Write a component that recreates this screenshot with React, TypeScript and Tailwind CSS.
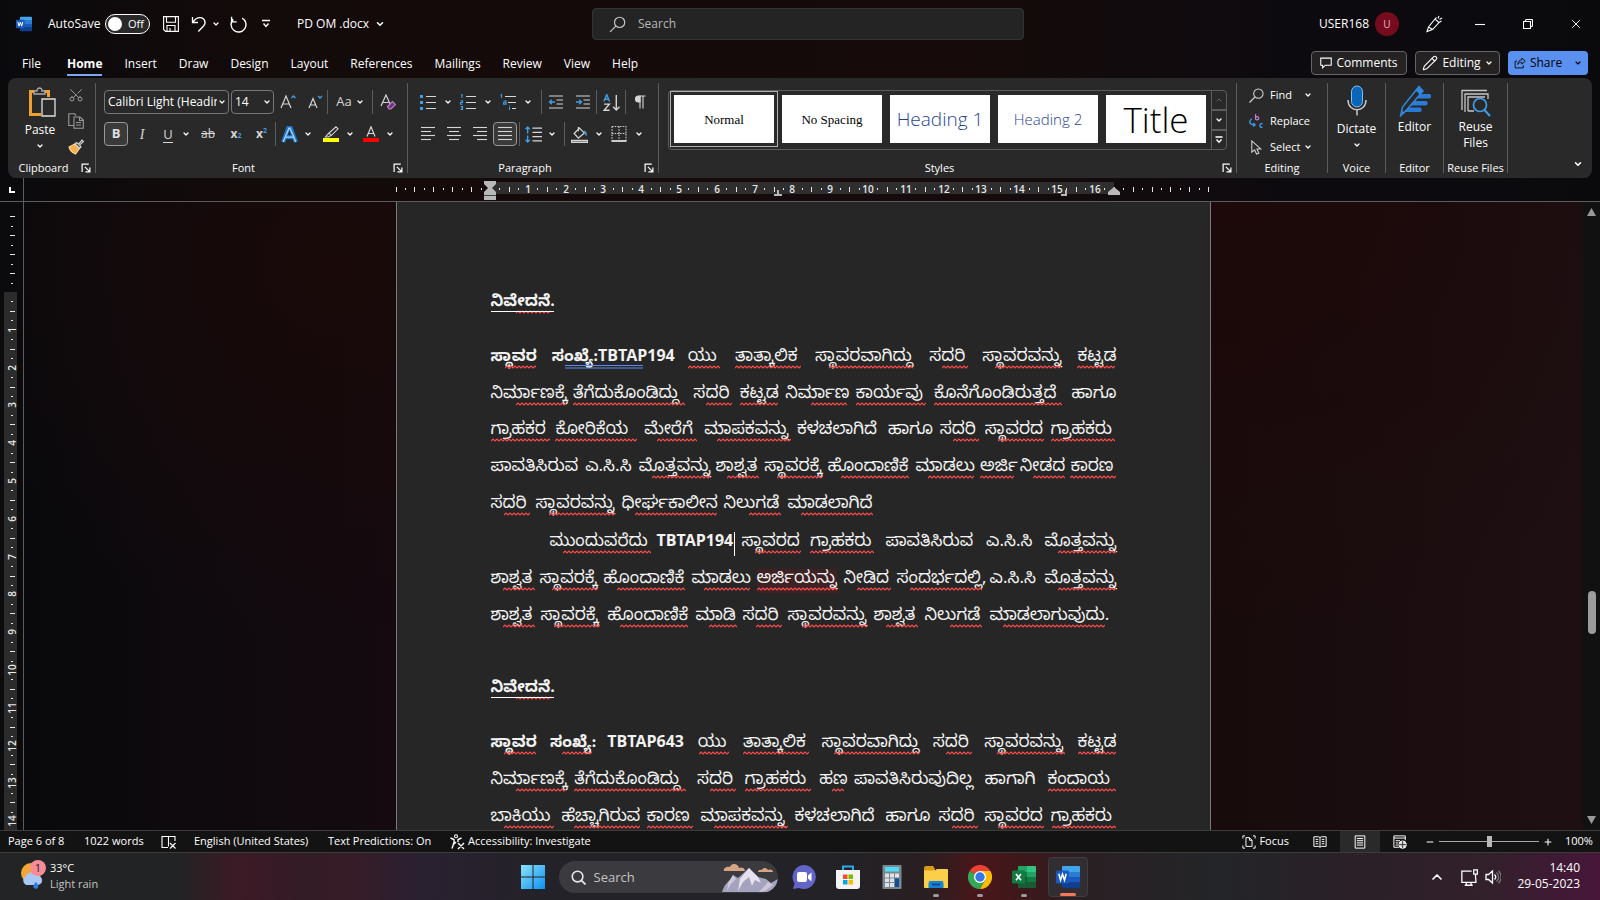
import React from "react";
import {
  Search,
  Scissors,
  Minus,
  Plus,
  X,
  Pencil,
  MessageSquare,
  ChevronDown,
  ChevronUp,
} from "lucide-react";

const PITCH = 37.8;

type IconProps = { className?: string; children: React.ReactNode; box?: string };

function Svg({ className = "size-4", children, box = "0 0 16 16" }: IconProps) {
  return (
    <svg viewBox={box} className={`shrink-0 ${className}`} fill="none" stroke="#d6d6d6" strokeWidth="1.1" aria-hidden="true">
      {children}
    </svg>
  );
}

function Chev({ className = "size-2.5" }: { className?: string }) {
  return <ChevronDown className={`shrink-0 text-white ${className}`} strokeWidth={3.8} aria-hidden="true" />;
}

function Tool({ label, className = "w-[26px]", children }: { label: string; className?: string; children: React.ReactNode }) {
  return (
    <button type="button" aria-label={label} className={`flex h-6 shrink-0 items-center justify-center ${className}`}>
      {children}
    </button>
  );
}

function Bar() {
  return <span className="h-6 w-px shrink-0 bg-[#5c5c5c]" />;
}

function Launcher({ label }: { label: string }) {
  return (
    <button type="button" aria-label={label} className="absolute right-1 bottom-0">
      <Svg className="size-2.5" box="0 0 9 9">
        <path d="M1 8V1h6M3.500 3.500L8 8M8 4v4H4" stroke="#fff" />
      </Svg>
    </button>
  );
}

function Group({ title, className, launcher, children }: { title: string; className: string; launcher?: boolean; children: React.ReactNode }) {
  return (
    <section aria-label={title} className={`relative my-[5px] flex shrink-0 flex-col border-r border-[#5c5c5c] ${className}`}>
      <div className="flex-1">{children}</div>
      <h2 className={`h-2.5 text-center text-[11px] leading-[10px] whitespace-nowrap text-white ${launcher ? "pr-4" : ""}`}>{title}</h2>
      {launcher && <Launcher label={`${title} settings`} />}
    </section>
  );
}

function WordLogo({ className }: { className: string }) {
  return (
    <svg viewBox="0 0 24 24" className={`shrink-0 ${className}`} aria-hidden="true">
      <path d="M7 1h16a1 1 0 0 1 1 1v5H6V2a1 1 0 0 1 1-1z" fill="#41a5ee" />
      <path d="M6 7h18v5H6z" fill="#2b7cd3" />
      <path d="M6 12h18v5.500H6z" fill="#185abd" />
      <path d="M6 17.500h18V22a1 1 0 0 1-1 1H7a1 1 0 0 1-1-1z" fill="#103f91" />
      <rect x="0" y="5.500" width="13" height="13" rx="1.200" fill="#1859bb" />
      <path d="M2.800 8.800l1.700 6.400 2-6 2 6 1.700-6.400" fill="none" stroke="#fff" strokeWidth="1.500" />
    </svg>
  );
}

function ExcelLogo() {
  return (
    <svg viewBox="0 0 24 24" className="size-6" aria-hidden="true">
      <path d="M7 1h8.500v6H6V2a1 1 0 0 1 1-1z" fill="#21a366" />
      <path d="M15 1h8a1 1 0 0 1 1 1v5h-9z" fill="#33c481" />
      <path d="M6 7h9.500v5H6z" fill="#107c41" />
      <path d="M15 7h9v5h-9z" fill="#21a366" />
      <path d="M6 12h9.500v5.500H6z" fill="#185c37" />
      <path d="M15 12h9v5.500h-9z" fill="#107c41" />
      <path d="M6 17.500h18V22a1 1 0 0 1-1 1H7a1 1 0 0 1-1-1z" fill="#185c37" />
      <rect x="0" y="5.500" width="13" height="13" rx="1.200" fill="#107c41" />
      <path d="M4 9l5 6.200M9 9l-5 6.200" stroke="#fff" strokeWidth="1.600" />
    </svg>
  );
}

function TitleBar() {
  return (
    <header className="flex h-12 items-center text-[12px]">
      <div className="flex flex-1 items-center pl-4">
        <WordLogo className="size-4" />
        <label className="ml-4 flex items-center gap-2">
          <span className="w-[49px] whitespace-nowrap">AutoSave</span>
          <input type="checkbox" className="peer sr-only" />
          <span className="flex h-5 w-[45px] items-center gap-1.5 rounded-full border border-white bg-[#292929] pl-0.5 text-[11px]">
            <span className="size-3.5 rounded-full bg-white" />
            Off
          </span>
        </label>
        <Tool label="Save" className="ml-3 w-[18px]">
          <Svg>
            <path d="M.6.6h14.800v14.800H2.600l-2-2zM3.500.6v5.600h9V.6M4 15.400V9.500h8v5.900M7 15v-3" stroke="#fff" />
          </Svg>
        </Tool>
        <Tool label="Undo" className="ml-2.5 w-[18px]">
          <Svg>
            <path d="M1.500 1v5.500H7M1.800 6.200C4 3 6.500 1.500 9.500 1.700c4 .3 6 4.800 3.300 8L7.300 15.500" stroke="#fff" strokeWidth="1.300" />
          </Svg>
        </Tool>
        <Tool label="Undo history" className="w-4">
          <Chev className="size-2" />
        </Tool>
        <Tool label="Redo" className="ml-1 w-5">
          <Svg className="size-[17px]">
            <path d="M1.500.8v4.700h4.800M11.500 2A7 7 0 1 1 3 3.200L1.700 5.200" stroke="#fff" strokeWidth="1.300" />
          </Svg>
        </Tool>
        <Tool label="Customize toolbar" className="ml-2.5 w-4">
          <Svg className="size-2.5" box="0 0 10 10">
            <path d="M1 1.500h8M2.500 4.500L5 7.500l2.500-3" stroke="#fff" strokeWidth="1.400" />
          </Svg>
        </Tool>
        <button type="button" className="ml-[23px] flex items-center gap-1.5 whitespace-nowrap text-[12px]">
          PD OM .docx <Chev className="size-2.5" />
        </button>
      </div>
      <label className="flex h-8 w-[432px] items-center gap-3 rounded border border-[#333] bg-[#252424] px-4">
        <Svg className="size-[17px]">
          <circle cx="10" cy="6" r="4.800" stroke="#c8c8c8" />
          <path d="M6.500 9.500L1 15" stroke="#c8c8c8" />
        </Svg>
        <span className="sr-only">Search document</span>
        <input type="search" placeholder="Search" className="h-6 w-full bg-transparent text-[12px] leading-6 text-[#c8c8c8] outline-none placeholder:text-[#b8b8b8]" />
      </label>
      <div className="flex flex-1 items-center justify-end">
        <span className="text-[12px]">USER168</span>
        <span className="ml-1.5 flex size-6 items-center justify-center rounded-full bg-[#750b1c] text-[10px] text-[#e9b8c8]">U</span>
        <Tool label="Ink tools" className="ml-[25px] w-5">
          <Svg className="size-[18px]" box="0 0 18 18">
            <path d="M2 16.500l1.500-4.500L10 4l4 3.500-6.500 7zM2 16.500l5.500-2M10 4l1.500-1.500M14 7.500L16.500 6M13 3.500l1-2.500M14.500 4.500L17 3M3.500 12l4 2.500" stroke="#fff" />
          </Svg>
        </Tool>
        <Tool label="Minimize" className="ml-3 w-12">
          <Svg className="size-2.5" box="0 0 10 10"><path d="M0 5.500h10" stroke="#fff" /></Svg>
        </Tool>
        <Tool label="Restore" className="w-12">
          <Svg className="size-2.5" box="0 0 10 10">
            <path d="M.5 2.500h7v7h-7zM2.500 2.500V1.500a1 1 0 0 1 1-1h5a1 1 0 0 1 1 1v5a1 1 0 0 1-1 1h-1" stroke="#fff" />
          </Svg>
        </Tool>
        <Tool label="Close" className="w-12">
          <X className="size-3.5 text-white" strokeWidth={1.6} />
        </Tool>
      </div>
    </header>
  );
}

const TABS = ["File", "Home", "Insert", "Draw", "Design", "Layout", "References", "Mailings", "Review", "View", "Help"];

function TabRow() {
  return (
    <nav className="flex h-[30px] items-center justify-between pr-3 pl-[22px] text-[12px]">
      <div className="flex gap-[22px] pt-px">
        {TABS.map((t) =>
          t === "Home" ? (
            <a key={t} href="#home" className="ml-1 h-6 border-b-2 border-[#7fa6f2] leading-6 font-bold text-white">{t}</a>
          ) : (
            <a key={t} href={`#${t.toLowerCase()}`} className="h-6 leading-6 text-white">{t}</a>
          ),
        )}
      </div>
      <div className="flex gap-2">
        <button type="button" className="flex h-6 w-24 items-center justify-center gap-1 rounded border border-[#666] bg-[#242222]">
          <Svg className="size-3"><path d="M1 1.500h14v9.500H7l-3.500 3.500V11H1z" stroke="#fff" strokeWidth="1.400" /></Svg> Comments
        </button>
        <button type="button" className="flex h-6 w-[85px] items-center justify-center gap-1 rounded border border-[#666] bg-[#242222]">
          <Pencil className="size-4" strokeWidth={1.6} /> Editing <Chev className="size-2" />
        </button>
        <button type="button" className="flex h-6 w-20 items-center justify-center gap-1 rounded bg-[#5a90f0] text-black">
          <Svg className="size-3">
            <path d="M4 5.500H1.500v9h11V11M10.500 1.500l4.500 4-4.500 4V7.200C7.500 7 6 8 5 10c.2-4 2.500-6 5.500-6.200z" stroke="#10131c" strokeWidth="1.300" />
          </Svg>
          Share
          <ChevronDown className="ml-2 size-2" strokeWidth={3.4} />
        </button>
      </div>
    </nav>
  );
}

function Lines({ rows }: { rows: [number, number][] }) {
  return (
    <Svg>
      {rows.map(([a, b], i) => (
        <path key={i} d={`M${a} ${1.5 + i * 4}H${b}`} />
      ))}
    </Svg>
  );
}

function ListLines() {
  return <path d="M6 2.500h10M6 8.500h10M6 14.500h10" />;
}

function FontGroup() {
  return (
    <Group title="Font" className="w-[312px]" launcher>
      <div className="flex flex-col gap-2 pt-[7px] pl-2">
        <div className="flex items-center">
          <button type="button" aria-label="Font name" className="flex h-6 w-[125px] items-center justify-between rounded border border-[#777] pr-0.5 pl-[3px] text-[12px]">
            <span className="w-[109px] overflow-hidden text-left whitespace-nowrap">Calibri Light (Headings)</span>
            <Chev className="size-2" />
          </button>
          <button type="button" aria-label="Font size" className="ml-0.5 flex h-6 w-[43px] items-center justify-between rounded border border-[#777] pr-0.5 pl-[3px] text-[12px]">
            14 <Chev className="size-2" />
          </button>
          <Tool label="Grow font" className="w-[28px]">
            <Svg><path d="M1 14L6 2l5 12M2.800 10h6.500" strokeWidth="1.200" /><path d="M11.500 4L13.500 2l2 2" stroke="#3f9ee6" strokeWidth="1.400" /></Svg>
          </Tool>
          <Tool label="Shrink font" className="w-[25px]">
            <Svg><path d="M2 14L6 4.500 10 14M3.500 11h5.200" strokeWidth="1.200" /><path d="M11 2l2 2 2-2" stroke="#3f9ee6" strokeWidth="1.400" /></Svg>
          </Tool>
          <Bar />
          <Tool label="Change case" className="w-11 gap-1 text-[13px] text-[#d6d6d6]">Aa <Chev className="size-2" /></Tool>
          <Bar />
          <Tool label="Clear formatting" className="w-[30px]">
            <Svg><path d="M1 12L6 1l4.500 10M2.500 8.500h6" strokeWidth="1.200" /><path d="M7.500 12.500l5-5 3 3-4.500 4.500H9z" stroke="#c77bd6" fill="#6b3a76" /></Svg>
          </Tool>
        </div>
        <div className="flex items-center">
          <Tool label="Bold" className="w-6 rounded border border-[#999] bg-[#3a3a3a] text-[13px] font-bold text-[#e0e0e0]">B</Tool>
          <Tool label="Italic" className="w-[28px] text-[14px] text-[#d6d6d6]"><span className="font-['Liberation_Serif',serif] italic">I</span></Tool>
          <Tool label="Underline" className="w-6 text-[13px] text-[#d6d6d6]"><span className="border-b border-[#d6d6d6] leading-4">U</span></Tool>
          <Tool label="Underline style" className="w-3"><Chev className="size-2" /></Tool>
          <Tool label="Strikethrough" className="w-8 text-[12px] text-[#d6d6d6]"><span className="line-through">ab</span></Tool>
          <Tool label="Subscript" className="w-6 text-[12px] font-bold text-[#d6d6d6]">x<sub className="text-[7px] text-[#3f9ee6]">2</sub></Tool>
          <Tool label="Superscript" className="w-[27px] text-[12px] font-bold text-[#d6d6d6]">x<sup className="text-[7px] text-[#3f9ee6]">2</sup></Tool>
          <Bar />
          <Tool label="Text effects" className="w-[26px]">
            <Svg className="size-[17px]"><path d="M2 15L7 1.500h2L14 15M4.500 10.500h7" stroke="#1b74c8" strokeWidth="4" /><path d="M2 15L7.500 2h1L14 15M4.500 10.500h7" stroke="#a9d2f5" strokeWidth="1.300" /></Svg>
          </Tool>
          <Tool label="Text effect options" className="w-3"><Chev className="size-2" /></Tool>
          <Tool label="Highlight" className="ml-1 w-[26px]">
            <Svg><path d="M13 .8l2 2-6.500 6.500-2.500-2.200zM6 7l-2.500 2.500-1 1.500h3l3-2" /><path d="M0 14h16" stroke="#ff0" strokeWidth="4" /></Svg>
          </Tool>
          <Tool label="Highlight colour" className="w-3"><Chev className="size-2" /></Tool>
          <Tool label="Font colour" className="ml-0.5 w-[26px]">
            <Svg><path d="M4 10.500L8 .8l4 9.700M5.200 7.500h5.600" strokeWidth="1.200" /><path d="M0 14h16" stroke="#f00" strokeWidth="4" /></Svg>
          </Tool>
          <Tool label="Font colour options" className="w-3"><Chev className="size-2" /></Tool>
        </div>
      </div>
    </Group>
  );
}

function ParagraphGroup() {
  return (
    <Group title="Paragraph" className="w-[251px]" launcher>
      <div className="flex flex-col gap-2 pt-[7px] pl-[7px]">
        <div className="flex items-center">
          <Tool label="Bullets"><Svg><ListLines /><path d="M0 2.500h3M0 8.500h3M0 14.500h3" stroke="#3f9ee6" strokeWidth="3" /></Svg></Tool>
          <Tool label="Bullet options" className="w-3.5"><Chev className="size-2" /></Tool>
          <Tool label="Numbering"><Svg><ListLines /><path d="M1 1l1-.5V4M.5 6.800h2v1.700h-2v1.700h2M.5 12.500h2v3h-2M1 14h1.500" stroke="#3f9ee6" /></Svg></Tool>
          <Tool label="Numbering options" className="w-3.5"><Chev className="size-2" /></Tool>
          <Tool label="Multilevel list"><Svg><path d="M5 2.500h11M8 8.500h8M12 14.500h4" /><path d="M.5 1l1-.5V4M3.500 7h2.500v3.200H3.500V8.700H6M9.500 13v3M9.500 11.500v.8" stroke="#3f9ee6" /></Svg></Tool>
          <Tool label="Multilevel options" className="w-3.5"><Chev className="size-2" /></Tool>
          <span className="w-1.5" />
          <Bar />
          <Tool label="Decrease indent" className="w-[28px]"><Svg><path d="M1 2h14M8.500 6h6.500M8.500 10h6.500M1 14h14" /><path d="M7 8H1.500M3.800 5.700L1.500 8l2.300 2.300" stroke="#3f9ee6" strokeWidth="1.300" /></Svg></Tool>
          <Tool label="Increase indent"><Svg><path d="M1 2h14M8.500 6h6.500M8.500 10h6.500M1 14h14" /><path d="M1 8h5.500M4.200 5.700L6.500 8l-2.300 2.300" stroke="#3f9ee6" strokeWidth="1.300" /></Svg></Tool>
          <Bar />
          <Tool label="Sort" className="w-[28px]"><Svg className="size-[17px]"><path d="M.8 7L3.500.5 6.200 7M1.700 5h3.600" stroke="#3f9ee6" strokeWidth="1.300" /><path d="M1 9.500h5L1 15.300h5.200M12.500 1v14M9.500 12l3 3 3-3" strokeWidth="1.300" /></Svg></Tool>
          <Bar />
          <Tool label="Show marks" className="w-[28px]"><Svg><path d="M7.500 2h6M8 2v12.500M11 2v12.500" /><path d="M8 2H6.500a3 3 0 0 0 0 6H8z" fill="#d6d6d6" /></Svg></Tool>
        </div>
        <div className="flex items-center">
          <Tool label="Align left"><Lines rows={[[1, 15], [1, 11], [1, 15], [1, 11]]} /></Tool>
          <Tool label="Centre"><Lines rows={[[1, 15], [3, 13], [1, 15], [3, 13]]} /></Tool>
          <Tool label="Align right"><Lines rows={[[1, 15], [5, 15], [1, 15], [5, 15]]} /></Tool>
          <Tool label="Justify" className="w-6 rounded border border-[#999] bg-[#3a3a3a]"><Lines rows={[[1, 15], [1, 15], [1, 15], [1, 15]]} /></Tool>
          <span className="w-0.5" />
          <Bar />
          <Tool label="Line spacing"><Svg className="size-[17px]"><path d="M7 2h9M7 6h9M7 10h9M7 14h9" /><path d="M2.500 1v6M.5 3l2-2 2 2M2.500 9v6M.5 13l2 2 2-2" stroke="#3f9ee6" strokeWidth="1.300" /></Svg></Tool>
          <Tool label="Spacing options" className="w-3"><Chev className="size-2" /></Tool>
          <span className="w-1.5" />
          <Bar />
          <Tool label="Shading" className="w-[28px]"><Svg className="size-[17px]"><path d="M3 7l5-5 4.500 4.500L7 11.500zM7 1v4" strokeWidth="1.200" /><path d="M12 5c2 .5 2.500 2 2 4" stroke="#3f9ee6" strokeWidth="1.500" /><path d="M.5 13.500h15v2H.5z" fill="#888" /></Svg></Tool>
          <Tool label="Shading options" className="w-3"><Chev className="size-2" /></Tool>
          <Tool label="Borders" className="w-[28px]"><Svg><path d="M1 .5h14v14M1 .5v14M8 .5v14M1 7.500h14" strokeDasharray="1.500 1.200" /><path d="M.5 15h15" stroke="#fff" strokeWidth="1.500" /></Svg></Tool>
          <Tool label="Border options" className="w-3"><Chev className="size-2" /></Tool>
        </div>
      </div>
    </Group>
  );
}

const STYLES = [
  { name: "Normal", cls: "font-['Liberation_Serif',serif] text-[13px] text-black" },
  { name: "No Spacing", cls: "font-['Liberation_Serif',serif] text-[13px] text-black" },
  { name: "Heading 1", cls: "font-['Open_Sans',sans-serif] font-light text-[19px] text-[#1f4590]" },
  { name: "Heading 2", cls: "font-['Open_Sans',sans-serif] font-light text-[15px] text-[#1f4590]" },
  { name: "Title", cls: "font-['Open_Sans',sans-serif] font-light text-[35px] text-black" },
];

function StylesGroup() {
  return (
    <Group title="Styles" className="w-[578px]" launcher>
      <div className="mt-[7px] ml-[9px] flex h-[60px] w-[559px] rounded border border-[#5c5c5c]">
        <div className="flex flex-1 items-center gap-2 pb-0.5">
          {STYLES.map((s, i) => (
            <button
              key={s.name}
              type="button"
              className={`flex h-12 w-[100px] items-center justify-center bg-white leading-none whitespace-nowrap ${s.cls} ${i === 0 ? "ml-[5px] outline outline-offset-[3px] outline-[#b0b0b0]" : ""}`}
            >
              {s.name}
            </button>
          ))}
        </div>
        <div className="flex w-[15px] flex-col divide-y-2 divide-[#5c5c5c] border-l border-[#5c5c5c]">
          <button type="button" aria-label="Previous styles" className="flex flex-1 items-center justify-center"><ChevronUp className="size-2 text-[#666]" strokeWidth={3} /></button>
          <button type="button" aria-label="Next styles" className="flex flex-1 items-center justify-center"><Chev className="size-2" /></button>
          <button type="button" aria-label="More styles" className="flex flex-1 items-center justify-center">
            <Svg className="size-2" box="0 0 8 8"><path d="M.5 1h7M1.500 3.500L4 6.200l2.500-2.700" stroke="#fff" strokeWidth="1.400" /></Svg>
          </button>
        </div>
      </div>
    </Group>
  );
}

function Ribbon() {
  return (
    <div className="mx-2 flex h-[100px] rounded-lg bg-[#292929]">
      <Group title="Clipboard" className="w-[88px]" launcher>
        <div className="flex">
          <button type="button" className="ml-3 flex w-10 flex-col items-center pt-1 text-[12px] leading-4">
            <svg viewBox="0 0 28 31" className="ml-1 h-[31px] w-7" aria-hidden="true">
              <path d="M7 4.500H2.500v23H13M16 4.500h4.500V10" fill="none" stroke="#f0a030" strokeWidth="3" />
              <path d="M6 7V4h3c0-4 5-4 5 0h3v3z" fill="#292929" stroke="#aaa" strokeWidth="1.300" />
              <path d="M14 12h13v17H14z" fill="#292929" stroke="#e0e0e0" strokeWidth="1.300" />
            </svg>
            <span className="mt-1">Paste</span>
            <Chev className="mt-1 size-2" />
          </button>
          <div className="ml-1 flex flex-col gap-0.5">
            <Tool label="Cut" className="w-6"><Scissors className="size-4 -rotate-90 text-[#9a9a9a]" strokeWidth={1.5} /></Tool>
            <Tool label="Copy" className="w-6"><Svg><path d="M6 12.500H.8V.8h5.700l1.700 1.700M6 4h6l3.300 3v8.300H6zM11.500 4v3.500h3.800M8 9.500h5M8 12h5" stroke="#9a9a9a" /></Svg></Tool>
            <Tool label="Format painter" className="w-6"><Svg><path d="M1 8l6-3 4.500 4.500L7.500 15C5 14 2 11.500 1 8z" fill="#f3b04a" stroke="#ffd893" /><path d="M7 4.800L8.500 3.500l2 1.700L14 1l1.500 1.500-4 3.700L13 8l-1.500 1.500z" fill="#444" stroke="#ddd" /></Svg></Tool>
          </div>
        </div>
      </Group>
      <FontGroup />
      <ParagraphGroup />
      <StylesGroup />
      <Group title="Editing" className="w-[91px]">
        <div className="flex flex-col gap-0.5 pl-3 text-[11px]">
          <button type="button" className="flex h-6 items-center gap-1.5">
            <Svg className="size-[15px]"><circle cx="10" cy="6" r="5" /><path d="M6.500 9.500L.5 15.500" strokeWidth="1.300" /></Svg>
            <span className="w-7 text-left">Find</span> <Chev className="size-2" />
          </button>
          <button type="button" className="flex h-6 items-center gap-1.5">
            <Svg className="size-[15px]"><path d="M7 0v6M7 4.500a1.700 1.700 0 1 0 3.400 0 1.700 1.700 0 1 0-3.400 0" stroke="#c77bd6" strokeWidth="1.300" /><path d="M3 5C-1 8 1 12.500 6.500 11.500M4.500 9.500l2 2-2 2M14.500 10.500c-3-1.500-4.500 4-.2 3.700" stroke="#3f9ee6" strokeWidth="1.400" /></Svg>
            Replace
          </button>
          <button type="button" className="flex h-6 items-center gap-1.5">
            <Svg className="size-[15px]"><path d="M3 1v12l3-2.500L8 15l2.500-1L8.500 9.500h4z" /></Svg>
            Select <Chev className="-ml-0.5 size-2" />
          </button>
        </div>
      </Group>
      <Group title="Voice" className="w-[58px]">
        <button type="button" className="flex w-full flex-col items-center pt-0.5 text-[12px] leading-4">
          <svg viewBox="0 0 20 32" className="h-8 w-5" fill="none" aria-hidden="true">
            <rect x="4.500" y="1" width="11" height="21" rx="5.500" fill="#0a66b8" stroke="#7cc0f5" />
            <path d="M1 15c0 13 18 13 18 0M10 24.500v6" stroke="#c8c8c8" strokeWidth="1.500" />
          </svg>
          <span className="mt-1">Dictate</span>
          <Chev className="mt-1 size-2" />
        </button>
      </Group>
      <Group title="Editor" className="w-[58px]">
        <button type="button" className="flex w-full flex-col items-center pt-0.5 text-[12px] leading-4">
          <svg viewBox="0 0 32 32" className="size-8" aria-hidden="true">
            <path d="M16 9h14a1.500 1.500 0 0 1 0 4.500H14zM13 16h13.500a1.500 1.500 0 0 1 0 4.500H10zM10 22.500h10.500a1.500 1.500 0 0 1 0 4.500H5z" fill="#2a7bd6" />
            <path d="M20 1.500l4 4.500L8 24.500 1.500 31 3.500 22z" fill="#2a2a2a" stroke="#3186e0" strokeWidth="1.500" />
            <path d="M20 1.500l4 4.500-3 3.500-4.500-4zM3 26l3.500 1.500L1.500 31z" fill="#3186e0" />
          </svg>
          <span className="mt-0.5">Editor</span>
        </button>
      </Group>
      <Group title="Reuse Files" className="w-16">
        <button type="button" className="flex w-full flex-col items-center pt-1.5 text-[12px] leading-4">
          <svg viewBox="0 0 30 30" className="size-[30px]" fill="none" stroke="#c8c8c8" aria-hidden="true">
            <path d="M1 21V1.500h25M4 23V5h23v5M7 22V8h17M7 22h6" strokeWidth="1.300" />
            <circle cx="19" cy="16" r="6.500" fill="#292929" stroke="#3f9ee6" strokeWidth="1.700" />
            <path d="M23.500 21L29 27" stroke="#3f9ee6" strokeWidth="2" />
          </svg>
          <span>Reuse</span>
          <span>Files</span>
        </button>
      </Group>
      <div className="flex flex-1 items-end justify-end pr-2 pb-[2px]">
        <Tool label="Collapse ribbon" className="w-3"><Chev className="size-2.5" /></Tool>
      </div>
    </div>
  );
}

function RulerMarks({ from, to, last, vertical }: { from: number; to: number; last: number; vertical?: boolean }) {
  const marks: React.ReactNode[] = [];
  for (let q = from * 4; q <= to * 4; q++) {
    if (q === 0) continue;
    const p = Math.round((q / 4) * PITCH);
    const n = q / 4;
    if (q % 4 === 0 && n > 0 && n <= last) {
      marks.push(
        <text key={q} x={vertical ? 0 : p} y={vertical ? 0 : 4} transform={vertical ? `translate(4 ${p}) rotate(-90)` : undefined} textAnchor="middle" fill="#e8e8e8" stroke="none" fontSize="10" fontWeight="600">
          {n}
        </text>,
      );
    } else {
      const s = q % 2 === 0 ? 2.5 : 1;
      marks.push(<path key={q} d={vertical ? `M${-s} ${p}H${s}` : `M${p} ${-s}V${s}`} stroke="#e8e8e8" strokeWidth="1" shapeRendering="crispEdges" />);
    }
  }
  return <>{marks}</>;
}

function HorizontalRuler() {
  return (
    <div className="flex h-6 border-b border-[#5c5c5c]">
      <div className="flex w-6 items-center justify-center border-r border-[#5c5c5c]">
        <svg viewBox="0 0 6 6" className="size-1.5" aria-hidden="true"><path d="M1 0v5h5" fill="none" stroke="#fff" strokeWidth="2" /></svg>
      </div>
      <div className="flex flex-1 justify-center pr-px">
        <svg viewBox="-94 0 815 22" className="h-[22px] w-[815px]" role="img" aria-label="Horizontal ruler">
          <rect x="0" y="4" width="624" height="12" fill="#2e2e2e" />
          <g transform="translate(0 11)"><RulerMarks from={-2.5} to={19} last={16} /></g>
          <path d="M-6 3h12v3l-4 4 4 4v10H-6V14l4-4-4-4z" fill="#b8b8b8" />
          <path d="M-6 17.500H6" stroke="#444" />
          <path d="M288 12v5M284 17h8M576 12v5h-5" stroke="#b8b8b8" strokeWidth="2" fill="none" />
          <path d="M618 17v-3l6-5 6 5v3z" fill="#b8b8b8" />
        </svg>
      </div>
      <div className="w-[17px]" />
    </div>
  );
}

/* text, width, squiggle start, squiggle length, options */
type W = { t: string; w: number; s?: number; l?: number; bold?: boolean; blue?: boolean; hot?: boolean; caret?: boolean };
const w = (t: string, width: number, s?: number, l?: number, o: Partial<W> = {}): W => ({ t, w: width, s, l, ...o });

function Word({ item }: { item: W }) {
  return (
    <span className={`relative inline-block h-6 leading-6 whitespace-nowrap ${item.bold ? "text-[16px] font-bold" : ""} ${item.hot ? "bg-[#3f2023]" : ""} ${item.caret ? "border-r border-white" : ""}`} style={{ width: item.w }}>
      {item.t}
      {item.l !== undefined && (
        <svg className="absolute bottom-0.5 h-1" style={{ left: item.s, width: item.l }} fill="none" aria-hidden="true">
          {item.blue ? (
            <path d={`M0 .5H${item.l}M0 3H${item.l}`} stroke="#5b8cf5" />
          ) : (
            <path d={"M0 3" + Array.from({ length: Math.ceil(item.l / 2) }, (_, i) => `L${i * 2 + 2} ${i % 2 ? 3 : 1}`).join("")} stroke="#fa4a4a" strokeWidth="1.2" />
          )}
        </svg>
      )}
    </span>
  );
}

function Line({ items, className = "justify-between" }: { items: W[]; className?: string }) {
  return (
    <div className={`flex items-center ${className}`}>
      {items.map((it, i) => (
        <Word key={i} item={it} />
      ))}
    </div>
  );
}

function Heading() {
  return (
    <h3 className="relative flex h-6 w-[63px]">
      <Word item={w("ನಿವೇದನೆ.", 63, 25, 35, { bold: true })} />
      <span className="absolute inset-x-0 bottom-1 border-b border-white" />
    </h3>
  );
}

const DAY = w("ಸದರಿ", 37, 13, 26);
const P1: W[][] = [
  [w("ಸ್ಥಾವರ", 45, 14, 31, { bold: true }), w("ಸಂಖ್ಯೆ:TBTAP194", 120, 13, 78, { bold: true, blue: true }), w("ಯು", 31, 0, 32), w("ತಾತ್ಕಾಲಿಕ", 64, 0, 66), w("ಸ್ಥಾವರವಾಗಿದ್ದು", 98, 14, 84), DAY, w("ಸ್ಥಾವರವನ್ನು", 79, 13, 66), w("ಕಟ್ಟಡ", 38, 0, 38)],
  [w("ನಿರ್ಮಾಣಕ್ಕೆ", 73, 25, 50), w("ತೆಗೆದುಕೊಂಡಿದ್ದು", 111, 0, 112), DAY, w("ಕಟ್ಟಡ", 36, 0, 38), w("ನಿರ್ಮಾಣ", 61, 26, 36), w("ಕಾರ್ಯವು", 69, 0, 70), w("ಕೊನೆಗೊಂಡಿರುತ್ತದೆ", 128, 0, 128), w("ಹಾಗೂ", 44)],
  [w("ಗ್ರಾಹಕರ", 57, 0, 59), w("ಕೋರಿಕೆಯ", 81, 0, 82), w("ಮೇರೆಗೆ", 52, 13, 40), w("ಮಾಪಕವನ್ನು", 85, 13, 74), w("ಕಳಚಲಾಗಿದೆ", 83), w("ಹಾಗೂ", 44), DAY, w("ಸ್ಥಾವರದ", 58, 13, 46), w("ಗ್ರಾಹಕರು", 65, 0, 64)],
  [w("ಪಾವತಿಸಿರುವ", 88), w("ಎ.ಸಿ.ಸಿ", 47), w("ಮೊತ್ತವನ್ನು", 70, 13, 58), w("ಶಾಶ್ವತ", 42, 12, 32), w("ಸ್ಥಾವರಕ್ಕೆ", 57, 13, 46), w("ಹೊಂದಾಣಿಕೆ", 81, 13, 68), w("ಮಾಡಲು", 58, 13, 46), w("ಅರ್ಜಿ", 33, 0, 34), w("ನೀಡದ", 44, 13, 32), w("ಕಾರಣ", 45, 0, 46)],
  [DAY, w("ಸ್ಥಾವರವನ್ನು", 78, 13, 66), w("ಧೀರ್ಘಕಾಲೀನ", 94, 13, 82), w("ನಿಲುಗಡೆ", 56, 25, 32), w("ಮಾಡಲಾಗಿದೆ", 83, 13, 72)],
];
const P2: W[][] = [
  [w("ಶಾಶ್ವತ", 42, 12, 32), w("ಸ್ಥಾವರಕ್ಕೆ", 57, 12, 46), w("ಹೊಂದಾಣಿಕೆ", 81, 13, 68), w("ಮಾಡಲು", 58, 12, 46), w("ಅರ್ಜಿಯನ್ನು", 80, 0, 80, { hot: true }), w("ನೀಡಿದ", 46, 13, 34), w("ಸಂದರ್ಭದಲ್ಲಿ,", 86, 13, 72), w("ಎ.ಸಿ.ಸಿ", 48), w("ಮೊತ್ತವನ್ನು", 71, 13, 58)],
  [w("ಶಾಶ್ವತ", 42, 12, 32), w("ಸ್ಥಾವರಕ್ಕೆ", 59, 13, 46), w("ಹೊಂದಾಣಿಕೆ", 80, 12, 68), w("ಮಾಡಿ", 39, 13, 28), DAY, w("ಸ್ಥಾವರವನ್ನು", 78, 14, 66), w("ಶಾಶ್ವತ", 43, 12, 32), w("ನಿಲುಗಡೆ", 57, 25, 32), w("ಮಾಡಲಾಗುವುದು.", 118, 13, 102)],
];
const P3: W[][] = [
  [w("ಸ್ಥಾವರ", 45, 13, 32, { bold: true }), w("ಸಂಖ್ಯೆ:", 43, 12, 30, { bold: true }), w("TBTAP643", 76, undefined, undefined, { bold: true }), w("ಯು", 31, 1, 30), w("ತಾತ್ಕಾಲಿಕ", 64, 0, 66), w("ಸ್ಥಾವರವಾಗಿದ್ದು", 97, 13, 86), DAY, w("ಸ್ಥಾವರವನ್ನು", 79, 13, 68), w("ಕಟ್ಟಡ", 38, 0, 38)],
  [w("ನಿರ್ಮಾಣಕ್ಕೆ", 73, 25, 50), w("ತೆಗೆದುಕೊಂಡಿದ್ದು", 112, 0, 112), DAY, w("ಗ್ರಾಹಕರು", 64, 0, 66), w("ಹಣ", 24, 13, 12), w("ಪಾವತಿಸಿರುವುದಿಲ್ಲ", 120), w("ಹಾಗಾಗಿ", 52), w("ಕಂದಾಯ", 68, 1, 68)],
  [w("ಬಾಕಿಯು", 62, 13, 50), w("ಹೆಚ್ಚಾಗಿರುವ", 76, 12, 66), w("ಕಾರಣ", 45, 0, 46), w("ಮಾಪಕವನ್ನು", 85, 13, 74), w("ಕಳಚಲಾಗಿದೆ", 82), w("ಹಾಗೂ", 44), DAY, w("ಸ್ಥಾವರದ", 57, 13, 46), w("ಗ್ರಾಹಕರು", 65, 1, 64)],
];

function DocumentArea() {
  return (
    <main className="flex h-[628px] overflow-hidden">
      <div className="w-6 shrink-0 border-r border-[#5c5c5c]">
        <svg viewBox="0 -90 24 628" className="h-[628px] w-6" role="img" aria-label="Vertical ruler">
          <rect x="4" y="0" width="13" height="540" fill="#2b2b2b" />
          <g transform="translate(12 0)"><RulerMarks from={-2} to={14} last={14} vertical /></g>
        </svg>
      </div>
      <div className="flex flex-1 justify-center bg-[radial-gradient(ellipse_30%_70%_at_78%_0%,#1d090a,transparent),radial-gradient(ellipse_25%_60%_at_20%_10%,#190a09,transparent),linear-gradient(90deg,#09090c,#150a10_25%,#180b0c_75%,#1d0f12)] pr-px">
        <article className="w-[815px] border-x border-[#7a7a7a] bg-[#262626] px-[94px] pt-[90px] font-['Noto_Sans_Kannada','Tunga','Noto_Sans','Open_Sans',sans-serif] text-[17px] text-[#f2f2f2]">
          <Heading />
          <div className="mt-[25px] grid h-[183px] auto-rows-fr">
            {P1.map((l, i) => <Line key={i} items={l} className={i === 4 ? "gap-2" : "justify-between"} />)}
          </div>
          <div className="mt-0.5 grid h-[110px] auto-rows-fr">
            <div className="flex items-center justify-between pl-[59px]">
              <div className="flex gap-[7px]">
                <Word item={w("ಮುಂದುವರೆದು", 100, 13, 88)} />
                <Word item={w("TBTAP194", 78, undefined, undefined, { bold: true, caret: true })} />
                <Word item={w("ಸ್ಥಾವರದ", 57, 13, 46)} />
              </div>
              <Word item={w("ಗ್ರಾಹಕರು", 64, 0, 64)} />
              <Word item={w("ಪಾವತಿಸಿರುವ", 89)} />
              <Word item={w("ಎ.ಸಿ.ಸಿ", 47)} />
              <Word item={w("ಮೊತ್ತವನ್ನು", 71, 13, 58)} />
            </div>
            <Line items={P2[0]} />
            <Line items={P2[1]} className="gap-2" />
          </div>
          <div className="mt-[42px]"><Heading /></div>
          <div className="mt-[25px] grid h-[110px] auto-rows-fr">
            {P3.map((l, i) => <Line key={i} items={l} />)}
          </div>
        </article>
      </div>
      <div className="flex w-[17px] shrink-0 flex-col items-center bg-[#111]">
        <svg viewBox="0 0 9 8" className="mt-1.5 h-2 w-[9px]" aria-hidden="true"><path d="M4.500 0L9 8H0z" fill="#999" /></svg>
        <span className="mt-[375px] h-[43px] w-2 rounded bg-[#9b9b9b]" />
        <svg viewBox="0 0 9 8" className="mt-auto mb-1.5 h-2 w-[9px]" aria-hidden="true"><path d="M4.500 8L9 0H0z" fill="#999" /></svg>
      </div>
    </main>
  );
}

function StatusBar() {
  return (
    <footer className="flex h-[23px] items-center border-y border-[#3c3c3c] bg-[#131313] pl-2 text-[11px] whitespace-nowrap">
      <span className="w-[76px]">Page 6 of 8</span>
      <span className="w-[77px]">1022 words</span>
      <Svg className="size-4"><path d="M7.500 2.500v10M7.500 2.500H1v11h6M7.500 2.500H14V7M9 9l5.500 5.500M14.500 9L9 14.500" stroke="#fff" /></Svg>
      <span className="ml-[17px] w-[134px]">English (United States)</span>
      <span className="w-[121px]">Text Predictions: On</span>
      <Svg className="size-4"><circle cx="7" cy="2.300" r="1.500" stroke="#fff" /><path d="M1.500 4l3.500 1.500v3L3 14.500M12.500 4L9 5.500v2.500M5 10l2-2M9 9l6 6M15 9l-6 6" stroke="#fff" strokeWidth="1.400" /></Svg>
      <span className="ml-[3px]">Accessibility: Investigate</span>
      <div className="ml-auto flex items-center">
        <button type="button" className="flex items-center gap-[3px]">
          <Svg className="size-3.5"><path d="M3.500 1H1v3M12.500 1H15v3M3.500 15H1v-3M12.500 15H15v-3M4.500 3h4l3 3v7h-7zM8.500 3v3h3" stroke="#fff" /></Svg>
          Focus
        </button>
        <button type="button" aria-label="Read mode" className="ml-[11px] flex h-[21px] w-10 items-center justify-center">
          <Svg className="size-3.5"><path d="M8 3v11M8 3L6.500 2H1v11h5.500L8 14l1.500-1H15V2H9.500zM3 5h3M3 7.500h3M3 10h3M10 5h3M10 7.500h3M10 10h3" stroke="#fff" /></Svg>
        </button>
        <button type="button" aria-label="Print layout" className="flex h-[21px] w-10 items-center justify-center bg-[#2a2a2a]">
          <Svg className="size-3.5"><path d="M2.500 1h11v14h-11zM4.500 4h7M4.500 6.500h7M4.500 9h7M4.500 11.500h7" stroke="#fff" /></Svg>
        </button>
        <button type="button" aria-label="Web layout" className="flex h-[21px] w-10 items-center justify-center">
          <Svg className="size-3.5"><path d="M7 14H1V1h13v5M1 3.500h13M3 6.500h5M3 9h3M3 11.500h3" stroke="#fff" /><circle cx="11" cy="11" r="4.200" fill="#ddd" stroke="#fff" /><path d="M7 11h8M11 7v8" stroke="#333" /></Svg>
        </button>
        <button type="button" aria-label="Zoom out" className="ml-[5px]"><Minus className="size-2.5" strokeWidth={2.5} /></button>
        <label className="relative mx-1 flex h-4 w-[100px] items-center">
          <span className="sr-only">Zoom</span>
          <input type="range" defaultValue={50} className="h-px w-full appearance-none bg-[#a8a8a8] [&::-webkit-slider-thumb]:h-[11px] [&::-webkit-slider-thumb]:w-[5px] [&::-webkit-slider-thumb]:appearance-none [&::-webkit-slider-thumb]:bg-[#b8b8b8]" />
        </label>
        <button type="button" aria-label="Zoom in"><Plus className="size-2.5" strokeWidth={2.5} /></button>
        <span className="ml-3 w-[35px]">100%</span>
      </div>
    </footer>
  );
}

function AppTile({ label, dot, active, children }: { label: string; dot?: boolean; active?: boolean; children: React.ReactNode }) {
  return (
    <button type="button" aria-label={label} className={`relative mx-0.5 flex size-10 items-center justify-center rounded ${active ? "border border-[#403d40] bg-[#312d30]" : ""}`}>
      {children}
      {(dot || active) && <span className={`absolute bottom-0 h-[3px] rounded-full ${active ? "w-4 bg-[#f2795a]" : "w-1.5 bg-[#9c9a9c]"}`} />}
    </button>
  );
}

function Taskbar() {
  return (
    <div className="flex h-12 items-center bg-[linear-gradient(90deg,#222426_0%,#222324_11%,#3c1a26_15%,#321c26_19%,#371c28_22%,#2a2031_26%,#242229_33%,#222227_52%,#2a1f22_58%,#49161a_61%,#3d181b_64%,#2a2024_68%,#232528_76%,#2b2027_85%,#32202b_93%,#47163a_100%)]">
      <div className="flex flex-1 items-center gap-1 pl-5">
        <svg viewBox="0 0 26 30" className="-mt-1 h-[30px] w-[26px]" aria-hidden="true">
          <circle cx="11" cy="13" r="10" fill="#f0a832" />
          <path d="M6 25a5 5 0 0 1 0-9c2-5 10-5 12 0 5 0 6 8 0 9z" fill="#a9c8f5" />
          <path d="M16 22c3 3 3 6 0 7-4-1-3-4 0-7z" fill="#2b7de0" />
          <circle cx="18" cy="8" r="8" fill="#f78c96" />
          <text x="18" y="12" textAnchor="middle" fontSize="11" fill="#222">1</text>
        </svg>
        <div className="-mt-0.5 text-[11px] leading-4">
          <div className="text-white">33°C</div>
          <div className="text-[#c4c4c4]">Light rain</div>
        </div>
      </div>
      <div className="flex items-center">
        <AppTile label="Start">
          <svg viewBox="0 0 24 24" className="size-6" aria-hidden="true">
            <defs><linearGradient id="win" x1="0" y1="0" x2="1" y2="1"><stop offset="0" stopColor="#8be3fb" /><stop offset="1" stopColor="#0e8fee" /></linearGradient></defs>
            <path d="M0 0h11.500v11.500H0zM12.500 0H24v11.500H12.500zM0 12.500h11.500V24H0zM12.500 12.500H24V24H12.500z" fill="url(#win)" />
          </svg>
        </AppTile>
        <label className="mx-1 flex h-8 w-[219px] items-center overflow-hidden rounded-full bg-[#3b3a3e] pl-3">
          <Svg className="size-[15px]"><circle cx="7" cy="7" r="5.700" stroke="#e8e8e8" strokeWidth="1.700" /><path d="M11 11l4.500 4.500" stroke="#e8e8e8" strokeWidth="1.800" /></Svg>
          <span className="sr-only">Search the computer</span>
          <input type="search" placeholder="Search" className="ml-2 h-6 w-0 flex-1 bg-transparent text-[13px] leading-6 outline-none placeholder:text-[#c4c4c4]" />
          <svg viewBox="0 0 56 30" className="h-[30px] w-14 shrink-0" aria-hidden="true">
            <path d="M2 9h21c0-4-5-4-6-3-1-5-8-5-9-1-4-1-7 2-6 4z" fill="#d8a487" />
            <path d="M36 10h15c0-3-4-3-5-2-2-3-6-2-6 0-3-1-4 1-4 2z" fill="#d8a487" />
            <path d="M0 30C3 20 8 20 11 13l5 3L27 6l9 9 8 2 5 4 7-4-3 13z" fill="#a3a3bd" />
            <path d="M27 6l9 9 3 6-6-3-3 6-3-9-6 5-5 9 2-12z" fill="#e7e1ee" />
            <path d="M11 13l3 4-5 5-4 7 1-8zM46 20l5 3-8 6-6 1z" fill="#cfc5da" />
          </svg>
        </label>
        <AppTile label="Chat">
          <svg viewBox="0 0 24 24" className="size-6" aria-hidden="true">
            <path d="M12 0a12 12 0 1 1-5 23l-6 1 1.500-5.500A12 12 0 0 1 12 0z" fill="#6264c7" />
            <rect x="5" y="7" width="10" height="10" rx="2" fill="#fff" /><path d="M16 10.500l3.500-3v9l-3.500-3z" fill="#fff" />
          </svg>
        </AppTile>
        <AppTile label="Store">
          <svg viewBox="0 0 24 24" className="size-6" aria-hidden="true">
            <path d="M7 6V1.500h10V6" fill="none" stroke="#2aa9e8" strokeWidth="2" />
            <path d="M0 5h24v16a3 3 0 0 1-3 3H3a3 3 0 0 1-3-3z" fill="#f4f4f4" />
            <path d="M7 9.500h4.500V14H7z" fill="#f25022" /><path d="M12.500 9.500H17V14h-4.500z" fill="#7fba00" /><path d="M7 15h4.500v4.500H7z" fill="#00a4ef" /><path d="M12.500 15H17v4.500h-4.500z" fill="#ffb900" />
          </svg>
        </AppTile>
        <AppTile label="Calculator">
          <svg viewBox="0 0 20 24" className="h-6 w-5" aria-hidden="true">
            <rect width="19" height="24" x=".5" rx="1" fill="#7d8790" /><path d="M3 2h14v4.500H3z" fill="#50dcf5" />
            <path d="M3 8.500h4v4H3zM8 8.500h4v4H8zM13 8.500h4v4h-4zM3 13.500h4v3.500H3zM8 13.500h4v3.500H8zM3 18h4v4H3zM8 18h4v4H8z" fill="#dde3e8" /><path d="M13 13.500h4V22h-4z" fill="#0f4f96" />
          </svg>
        </AppTile>
        <AppTile label="File Explorer" dot>
          <svg viewBox="0 0 24 24" className="size-6" aria-hidden="true">
            <path d="M0 3a2 2 0 0 1 2-2h7l2 3v4H0z" fill="#d99a1c" /><path d="M0 5.500h11l2-1.500h10a1 1 0 0 1 1 1v18H1a1 1 0 0 1-1-1z" fill="#fccf4b" />
            <path d="M4.500 23v-5a2 2 0 0 1 2-2h11a2 2 0 0 1 2 2v5z" fill="#1582d4" /><path d="M8 19.500h8" stroke="#0b4f8f" strokeWidth="2" />
          </svg>
        </AppTile>
        <AppTile label="Chrome" dot>
          <svg viewBox="0 0 24 24" className="size-6" aria-hidden="true">
            <path d="M12 12L1.600 6A12 12 0 0 1 22.400 6z" fill="#ea4335" /><path d="M1.600 6A12 12 0 0 0 12 24l5.200-9z" fill="#34a853" /><path d="M22.400 6A12 12 0 0 1 12 24l5.200-9L12 6z" fill="#fbbc05" />
            <circle cx="12" cy="12" r="6" fill="#fff" /><circle cx="12" cy="12" r="4.700" fill="#3578e5" />
          </svg>
        </AppTile>
        <AppTile label="Excel" dot><ExcelLogo /></AppTile>
        <AppTile label="Word" active><WordLogo className="size-6" /></AppTile>
      </div>
      <div className="flex flex-1 items-center justify-end pr-5">
        <ChevronUp className="size-4 text-white" strokeWidth={2.5} />
        <Svg className="ml-4 size-[17px]"><path d="M10 2H.8v10.500H14V9M5 12.500V15M9.500 12.500V15M3.500 15.300H11M12 .8h3.400v4H12zM13.700 5v4" stroke="#fff" strokeWidth="1.200" /></Svg>
        <Svg className="ml-[7px] size-4"><path d="M1 5.500h2.500L7.500 2v12l-4-3.500H1zM9.500 5.500c1.500 1.500 1.500 3.500 0 5" stroke="#fff" strokeWidth="1.300" /><path d="M11.500 3.500c2.800 2.500 2.800 6.500 0 9M13.500 1.800c3.500 3.500 3.500 9 0 12.400" stroke="#777" strokeWidth="1.300" /></Svg>
        <div className="ml-4 pb-0.5 text-right text-[12px] leading-4 text-white">
          <div>14:40</div>
          <div>29-05-2023</div>
        </div>
      </div>
    </div>
  );
}

export default function App() {
  return (
    <div className="flex min-h-screen flex-col overflow-hidden bg-[#0b0a0d] font-['Open_Sans','Noto_Sans',sans-serif] text-white">
      <div className="bg-[linear-gradient(90deg,#0a0a0c,#130a0a_15%,#160b0a_60%,#0d0a0f_80%,#0a0a0d)]">
        <TitleBar />
        <TabRow />
        <Ribbon />
        <HorizontalRuler />
      </div>
      <DocumentArea />
      <StatusBar />
      <Taskbar />
    </div>
  );
}
